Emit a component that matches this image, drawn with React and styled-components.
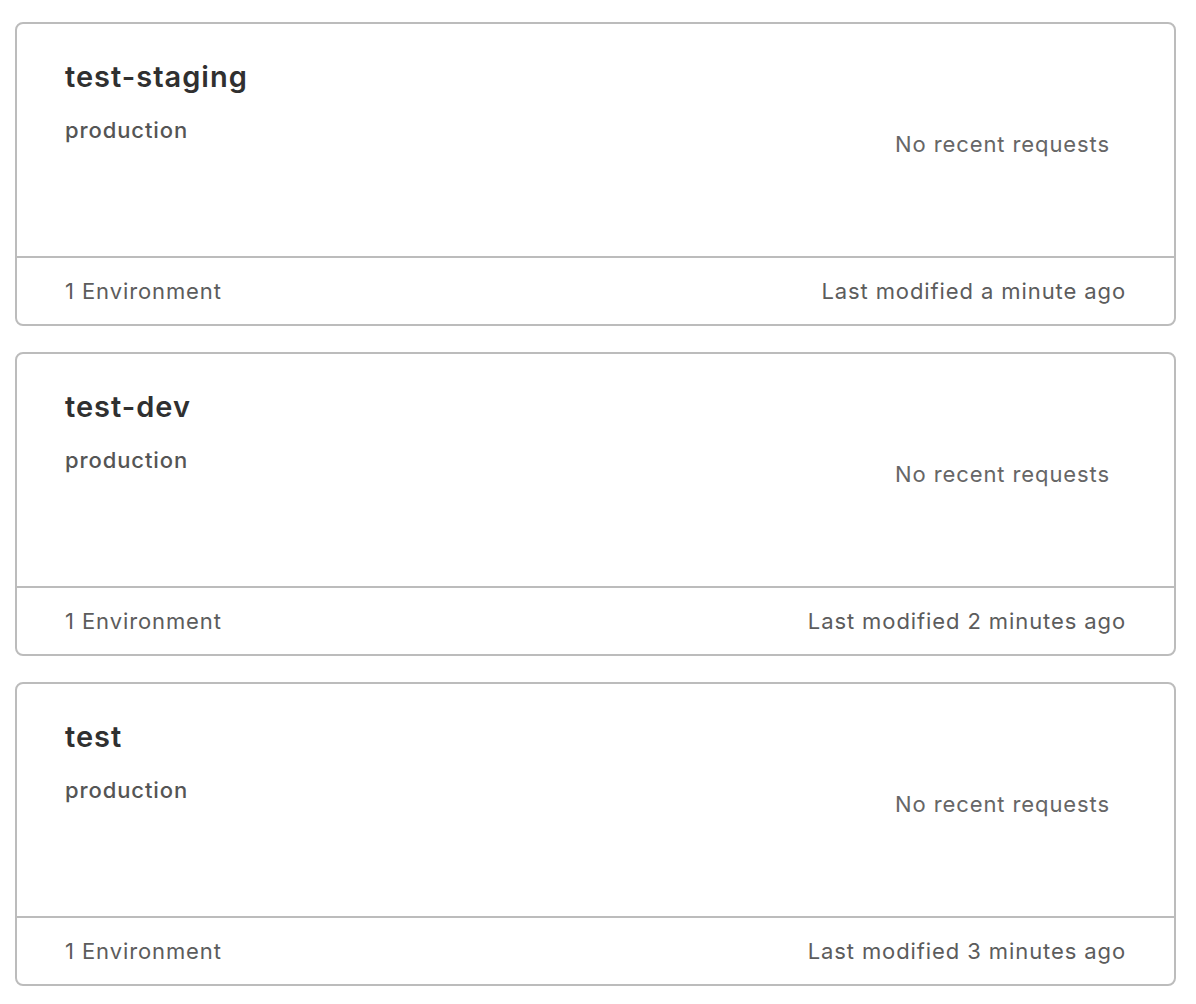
import React from 'react';
import styled, { createGlobalStyle } from 'styled-components';

const GlobalStyle = createGlobalStyle`
  body {
    margin: 0;
    background: #fff;
    font-family: Inter, "Noto Sans", sans-serif;
  }
`;

const apps = [
  { name: 'test-staging', env: 'production', modified: 'a minute ago' },
  { name: 'test-dev', env: 'production', modified: '2 minutes ago' },
  { name: 'test', env: 'production', modified: '3 minutes ago' },
];

const AppCard = ({ name, env, modified }) => {
  return (
    <Card>
      <Body>
        <Info>
          <Title>{name}</Title>
          <EnvName>{env}</EnvName>
        </Info>
        <Requests>No recent requests</Requests>
      </Body>
      <Footer>
        <FooterText>1 Environment</FooterText>
        <FooterText>Last modified {modified}</FooterText>
      </Footer>
    </Card>
  );
};

const App = () => {
  return (
    <>
      <GlobalStyle />
      <List>
        {apps.map((a) => (
          <AppCard key={a.name} {...a} />
        ))}
      </List>
    </>
  );
};

const List = styled.div`
  display: flex;
  flex-direction: column;
  gap: 26px;
  padding: 22px 20px 0 15px;
`;

const Card = styled.div`
  border: 2px solid #bcbcbc;
  border-radius: 8px;
  background: #fff;
  display: flex;
  flex-direction: column;
`;

const Body = styled.div`
  height: 232px;
  box-sizing: border-box;
  display: flex;
  justify-content: space-between;
  padding: 35px 64px 0 48px;
`;

const Info = styled.div`
  display: flex;
  flex-direction: column;
  gap: 23px;
`;

const Title = styled.div`
  font-size: 29px;
  line-height: 36px;
  font-weight: 600;
  letter-spacing: 1px;
  color: #303030;
`;

const EnvName = styled.div`
  font-size: 22px;
  line-height: 24px;
  font-weight: 500;
  letter-spacing: 0.9px;
  color: #555;
`;

const Requests = styled.div`
  margin-top: 73px;
  font-size: 22px;
  line-height: 24px;
  letter-spacing: 0.9px;
  color: #666;
`;

const Footer = styled.div`
  border-top: 2px solid #bcbcbc;
  height: 66px;
  display: flex;
  align-items: center;
  justify-content: space-between;
  padding: 0 48px;
`;

const FooterText = styled.span`
  font-size: 22px;
  line-height: 24px;
  letter-spacing: 0.9px;
  color: #5c5c5c;
`;

export default App;
